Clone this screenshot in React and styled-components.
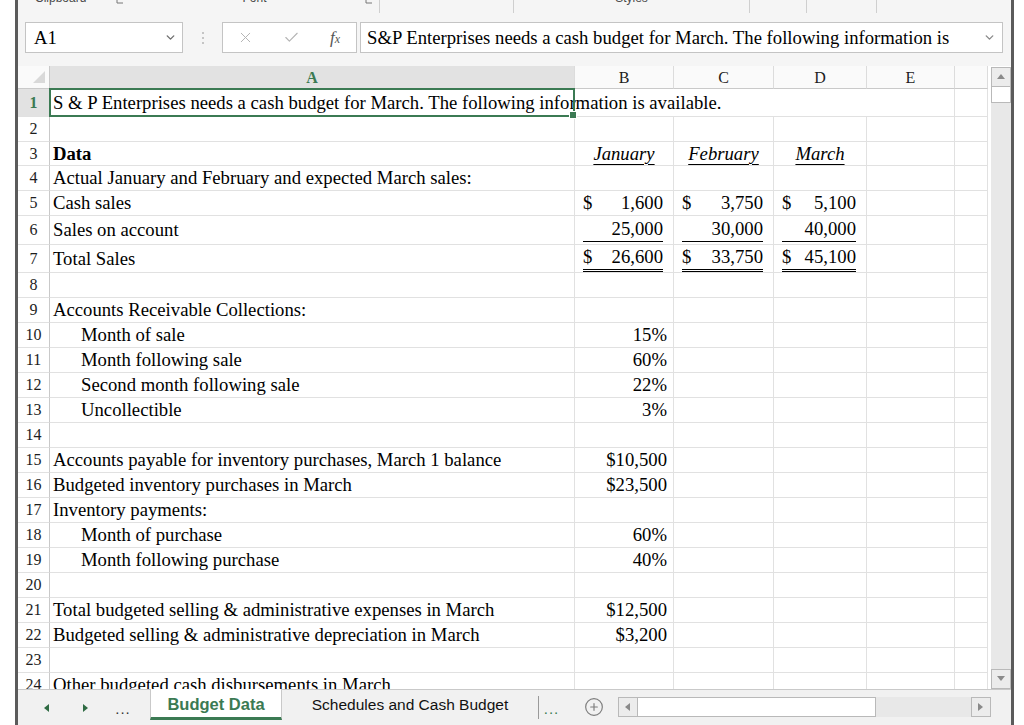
import React from 'react'
import styled, { createGlobalStyle } from 'styled-components'
import { X, Check, ChevronDown, CirclePlus } from 'lucide-react'

const GREEN = '#3b7a53'
const GRID = '#e1e1e1'
const HEAD_LINE = '#c9c9c9'

const GlobalStyle = createGlobalStyle`
  html, body {
    margin: 0;
    padding: 0;
    background: #fff;
  }
  body {
    width: 1024px;
    height: 725px;
    overflow: hidden;
    font-family: 'Liberation Serif', 'Times New Roman', serif;
    color: #000;
  }
`

const Window = styled.div`
  margin-left: 15px;
  width: 999px;
  height: 725px;
  box-sizing: border-box;
  border-left: 3px solid #5b5b5b;
  border-right: 3px solid #5b5b5b;
  display: flex;
  flex-direction: column;
  background: #f5f5f5;
  overflow: hidden;
`

/* ribbon remnants at the very top */
const Ribbon = styled.div`
  height: 13px;
  flex: 0 0 13px;
  display: flex;
  overflow: hidden;
`

const RibbonGroup = styled.div`
  width: ${p => p.$w}px;
  flex: 0 0 ${p => p.$w}px;
  display: flex;
  justify-content: ${p => (p.$left ? 'flex-start' : 'center')};
  padding-left: ${p => (p.$left ? 17 : 0)}px;
  box-sizing: border-box;
  position: relative;
  border-right: ${p => (p.$sep ? '1px solid #cfcfcf' : 'none')};
`

const RibbonLabel = styled.span`
  font-family: 'Liberation Sans', Arial, sans-serif;
  font-size: 12px;
  line-height: 12px;
  color: #4a4a4a;
  margin-top: -8px;
`

const Launcher = styled.svg`
  position: absolute;
  right: 6px;
  top: -4px;
`

const FormulaRow = styled.div`
  flex: 0 0 53px;
  height: 53px;
  box-sizing: border-box;
  padding: 9px 8px 13px 7px;
  display: flex;
  align-items: stretch;
`

const NameBox = styled.div`
  width: 158px;
  box-sizing: border-box;
  border: 1px solid #c4c4c4;
  background: #fff;
  display: flex;
  align-items: center;
  justify-content: space-between;
  padding: 0 5px 0 8px;
  font-size: 18.7px;
`

const Dots = styled.div`
  width: 39px;
  display: flex;
  flex-direction: column;
  align-items: center;
  justify-content: center;
  gap: 3px;
  & span {
    width: 2px;
    height: 2px;
    border-radius: 50%;
    background: #b5b5b5;
  }
`

const FxBox = styled.div`
  width: 135px;
  box-sizing: border-box;
  border: 1px solid #c4c4c4;
  background: #fff;
  display: flex;
  align-items: center;
  padding: 0 16px 0 14px;
  justify-content: space-between;
  color: #b4b4b4;
`

const Fx = styled.span`
  font-style: italic;
  font-size: 17px;
  color: #555;
  & small {
    font-size: 12px;
  }
`

const FormulaInput = styled.div`
  flex: 1;
  margin-left: 3px;
  box-sizing: border-box;
  border: 1px solid #c4c4c4;
  background: #fff;
  display: flex;
  align-items: center;
  justify-content: space-between;
  padding: 0 6px 0 6px;
  font-size: 18.7px;
  white-space: nowrap;
`

/* sheet */
const Sheet = styled.div`
  flex: 0 0 623px;
  height: 623px;
  display: flex;
  background: #fff;
  overflow: hidden;
`

const Grid = styled.div`
  width: 970px;
  display: grid;
  grid-template-columns: 32px 525px 99px 100px 93px 88px 33px;
  grid-template-rows: 23px 28px 25px 24px 25px 25px 29px 28px repeat(17, 25px);
  align-content: start;
`

const Corner = styled.div`
  background: #fafafa;
  border-right: 1px solid ${HEAD_LINE};
  border-bottom: 1px solid ${HEAD_LINE};
  display: flex;
  align-items: flex-end;
  justify-content: flex-end;
  padding: 0 4px 5px 0;
  & svg {
    display: block;
  }
`

const ColHeader = styled.div`
  background: ${p => (p.$selected ? '#e2e2e2' : '#fafafa')};
  color: ${p => (p.$selected ? GREEN : '#1d1d1d')};
  font-weight: ${p => (p.$selected ? 700 : 400)};
  border-right: 1px solid #dcdcdc;
  border-bottom: 1px solid ${HEAD_LINE};
  display: flex;
  align-items: center;
  justify-content: center;
  padding-top: 2px;
  font-size: 16px;
`

const RowHeader = styled.div`
  background: ${p => (p.$selected ? '#e2e2e2' : '#fff')};
  color: ${p => (p.$selected ? GREEN : '#1d1d1d')};
  font-weight: ${p => (p.$selected ? 700 : 400)};
  border-right: 1px solid ${HEAD_LINE};
  border-bottom: 1px solid ${GRID};
  display: flex;
  align-items: center;
  justify-content: center;
  font-size: 16px;
`

const Cell = styled.div`
  border-right: ${p => (p.$open ? 'none' : `1px solid ${GRID}`)};
  border-bottom: 1px solid ${GRID};
  display: flex;
  align-items: center;
  justify-content: ${p => p.$justify || 'flex-start'};
  padding: 0 ${p => p.$pr ?? 3}px 0 ${p => p.$pl ?? 3}px;
  white-space: nowrap;
  font-size: 18.7px;
  font-weight: ${p => (p.$bold ? 700 : 400)};
  min-width: 0;
`

const ActiveCell = styled(Cell)`
  position: relative;
  overflow: visible;
  z-index: 1;
  &::after {
    content: '';
    position: absolute;
    left: -1px;
    top: -1px;
    right: -1px;
    bottom: -1px;
    border: 2px solid ${GREEN};
    pointer-events: none;
  }
  &::before {
    content: '';
    position: absolute;
    right: -3px;
    bottom: -3px;
    width: 6px;
    height: 6px;
    background: ${GREEN};
    border: 1px solid #fff;
    z-index: 2;
  }
`

const AcctCell = styled(Cell)`
  align-items: stretch;
  padding: 0 10px 0 8px;
`

const Acct = styled.div`
  flex: 1;
  display: flex;
  align-items: center;
  justify-content: space-between;
  margin-bottom: ${p => (p.$line === 'single' ? 2 : 0)}px;
  border-bottom: ${p =>
    p.$line === 'single' ? '1px solid #000' : p.$line === 'double' ? '3px double #000' : 'none'};
`

const MonthLabel = styled.span`
  font-style: italic;
  text-decoration: underline;
  text-underline-offset: 4px;
  text-decoration-thickness: 1px;
`

/* vertical scroll */
const VScroll = styled.div`
  width: 23px;
  padding: 1px 0 0 3px;
  box-sizing: border-box;
  display: flex;
  flex-direction: column;
`

const ScrollButton = styled.div`
  flex: 0 0 20px;
  height: 20px;
  width: ${p => p.$w || 20}px;
  box-sizing: border-box;
  border: 1px solid #b9b9b9;
  background: #ececec;
  display: flex;
  align-items: center;
  justify-content: center;
`

const VThumb = styled.div`
  flex: 0 0 16px;
  box-sizing: border-box;
  border: 1px solid #b9b9b9;
  border-top: none;
  background: #fff;
`

const VTrack = styled.div`
  flex: 1;
  background: #e8e8e8;
`

/* tab bar */
const TabBar = styled.div`
  flex: 1;
  box-sizing: border-box;
  border-top: 1px solid ${HEAD_LINE};
  background: #f1f1f1;
  display: flex;
  align-items: stretch;
  font-family: 'Liberation Sans', Arial, sans-serif;
`

const NavArrow = styled.div`
  width: ${p => p.$w}px;
  display: flex;
  align-items: center;
  justify-content: center;
  padding-top: 1px;
  color: ${p => p.$color || '#333'};
  font-size: 15px;
  letter-spacing: 1px;
`

const Tab = styled.div`
  width: ${p => p.$w}px;
  box-sizing: border-box;
  display: flex;
  align-items: center;
  justify-content: center;
  margin-top: -1px;
  padding-top: 3px;
  height: 31px;
  font-size: ${p => (p.$active ? 16.5 : 15.5)}px;
  font-weight: ${p => (p.$active ? 700 : 400)};
  color: ${p => (p.$active ? GREEN : '#111')};
  background: ${p => (p.$active ? '#fff' : 'transparent')};
  border-left: ${p => (p.$active ? `1px solid ${HEAD_LINE}` : 'none')};
  border-right: ${p => (p.$active ? `1px solid ${HEAD_LINE}` : 'none')};
  border-bottom: ${p => (p.$active ? `3px solid ${GREEN}` : '3px solid transparent')};
`

const TabSep = styled.div`
  width: 1px;
  background: #9a9a9a;
  margin: 6px 0 6px;
`

const AddSheet = styled.div`
  width: 54px;
  display: flex;
  align-items: center;
  justify-content: flex-end;
  padding: 0 14px 1px 0;
  box-sizing: border-box;
  color: #7d7d7d;
`

const HScroll = styled.div`
  width: 373px;
  height: 20px;
  margin-top: 7px;
  display: flex;
`

const HThumb = styled.div`
  width: 238px;
  box-sizing: border-box;
  border: 1px solid #b9b9b9;
  border-left: none;
  background: #fff;
`

const HTrack = styled.div`
  flex: 1;
  background: #e8e8e8;
`

const Tri = ({ dir, color = '#8a8a8a', size = 8 }) => {
  const pts = {
    up: '0,6 4,1 8,6',
    down: '0,1 4,6 8,1',
    left: '6,0 1,4 6,8',
    right: '1,0 6,4 1,8'
  }[dir]
  return (
    <svg width={size} height={size} viewBox="0 0 8 8">
      <polygon points={pts} fill={color} />
    </svg>
  )
}

const rows = [
  { n: 1, a: 'S & P Enterprises needs a cash budget for March. The following information is available.', active: true },
  { n: 2 },
  { n: 3, a: 'Data', bold: true, months: ['January', 'February', 'March'] },
  { n: 4, a: 'Actual January and February and expected March sales:' },
  { n: 5, a: 'Cash sales', acct: [['$', '1,600'], ['$', '3,750'], ['$', '5,100']] },
  { n: 6, a: 'Sales on account', acct: [['', '25,000'], ['', '30,000'], ['', '40,000']], line: 'single' },
  { n: 7, a: 'Total Sales', acct: [['$', '26,600'], ['$', '33,750'], ['$', '45,100']], line: 'double' },
  { n: 8 },
  { n: 9, a: 'Accounts Receivable Collections:' },
  { n: 10, a: 'Month of sale', indent: true, b: '15%' },
  { n: 11, a: 'Month following sale', indent: true, b: '60%' },
  { n: 12, a: 'Second month following sale', indent: true, b: '22%' },
  { n: 13, a: 'Uncollectible', indent: true, b: '3%' },
  { n: 14 },
  { n: 15, a: 'Accounts payable for inventory purchases, March 1 balance', b: '$10,500' },
  { n: 16, a: 'Budgeted inventory purchases in March', b: '$23,500' },
  { n: 17, a: 'Inventory payments:' },
  { n: 18, a: 'Month of purchase', indent: true, b: '60%' },
  { n: 19, a: 'Month following purchase', indent: true, b: '40%' },
  { n: 20 },
  { n: 21, a: 'Total budgeted selling & administrative expenses in March', b: '$12,500' },
  { n: 22, a: 'Budgeted selling & administrative depreciation in March', b: '$3,200' },
  { n: 23 },
  { n: 24, a: 'Other budgeted cash disbursements in March' }
]

const renderRight = row => {
  if (row.months) {
    return row.months.map(m => (
      <Cell key={m} $justify="center">
        <MonthLabel>{m}</MonthLabel>
      </Cell>
    ))
  }
  if (row.acct) {
    return row.acct.map(([sign, value], i) => (
      <AcctCell key={i}>
        <Acct $line={row.line}>
          <span>{sign}</span>
          <span>{value}</span>
        </Acct>
      </AcctCell>
    ))
  }
  return [
    <Cell key="b" $justify="flex-end" $pr={6} $open={row.active}>
      {row.b}
    </Cell>,
    <Cell key="c" $open={row.active} />,
    <Cell key="d" $open={row.active} />
  ]
}

const SheetRow = ({ row }) => {
  const A = row.active ? ActiveCell : Cell
  return (
    <>
      <RowHeader $selected={row.active}>{row.n}</RowHeader>
      <A $bold={row.bold} $pl={row.indent ? 31 : 3}>
        {row.a}
      </A>
      {renderRight(row)}
      <Cell />
      <Cell />
    </>
  )
}

const App = () => (
  <>
    <GlobalStyle />
    <Window>
      <Ribbon>
        <RibbonGroup $w={112} $left>
          <RibbonLabel>Clipboard</RibbonLabel>
          <Launcher width="8" height="8" viewBox="0 0 8 8">
            <path d="M1 1v6h6" fill="none" stroke="#777" strokeWidth="1" />
          </Launcher>
        </RibbonGroup>
        <RibbonGroup $w={250} $sep>
          <RibbonLabel>Font</RibbonLabel>
          <Launcher width="8" height="8" viewBox="0 0 8 8">
            <path d="M1 1v6h6" fill="none" stroke="#777" strokeWidth="1" />
          </Launcher>
        </RibbonGroup>
        <RibbonGroup $w={134} $sep />
        <RibbonGroup $w={236} $sep>
          <RibbonLabel>Styles</RibbonLabel>
        </RibbonGroup>
        <RibbonGroup $w={57} $sep />
        <RibbonGroup $w={70} $sep />
        <RibbonGroup $w={134} />
      </Ribbon>

      <FormulaRow>
        <NameBox>
          <span>A1</span>
          <ChevronDown size={13} strokeWidth={2.6} color="#6f6f6f" />
        </NameBox>
        <Dots>
          <span />
          <span />
          <span />
        </Dots>
        <FxBox>
          <X size={17} strokeWidth={1.4} />
          <Check size={17} strokeWidth={1.6} />
          <Fx>
            f<small>x</small>
          </Fx>
        </FxBox>
        <FormulaInput>
          <span>S&amp;P Enterprises needs a cash budget for March. The following information is</span>
          <ChevronDown size={13} strokeWidth={2.6} color="#8a8a8a" />
        </FormulaInput>
      </FormulaRow>

      <Sheet>
        <Grid>
          <Corner>
            <svg width="12" height="12" viewBox="0 0 12 12">
              <polygon points="12,0 12,12 0,12" fill="#d9d9d9" />
            </svg>
          </Corner>
          <ColHeader $selected>A</ColHeader>
          <ColHeader>B</ColHeader>
          <ColHeader>C</ColHeader>
          <ColHeader>D</ColHeader>
          <ColHeader>E</ColHeader>
          <ColHeader />
          {rows.map(row => (
            <SheetRow key={row.n} row={row} />
          ))}
        </Grid>
        <VScroll>
          <ScrollButton>
            <Tri dir="up" />
          </ScrollButton>
          <VThumb />
          <VTrack />
          <ScrollButton>
            <Tri dir="down" />
          </ScrollButton>
        </VScroll>
      </Sheet>

      <TabBar>
        <NavArrow $w={58} $color="#2f6b43">
          <Tri dir="left" color="#2f6b43" />
        </NavArrow>
        <NavArrow $w={20} $color="#2f6b43">
          <Tri dir="right" color="#2f6b43" />
        </NavArrow>
        <NavArrow $w={54}>...</NavArrow>
        <Tab $w={132} $active>
          Budget Data
        </Tab>
        <Tab $w={256}>Schedules and Cash Budget</Tab>
        <TabSep />
        <NavArrow $w={25} $color={GREEN}>
          ...
        </NavArrow>
        <AddSheet>
          <CirclePlus size={20} strokeWidth={1.4} />
        </AddSheet>
        <HScroll>
          <ScrollButton>
            <Tri dir="left" />
          </ScrollButton>
          <HThumb />
          <HTrack />
          <ScrollButton $w={21}>
            <Tri dir="right" />
          </ScrollButton>
        </HScroll>
      </TabBar>
    </Window>
  </>
)

export default App
